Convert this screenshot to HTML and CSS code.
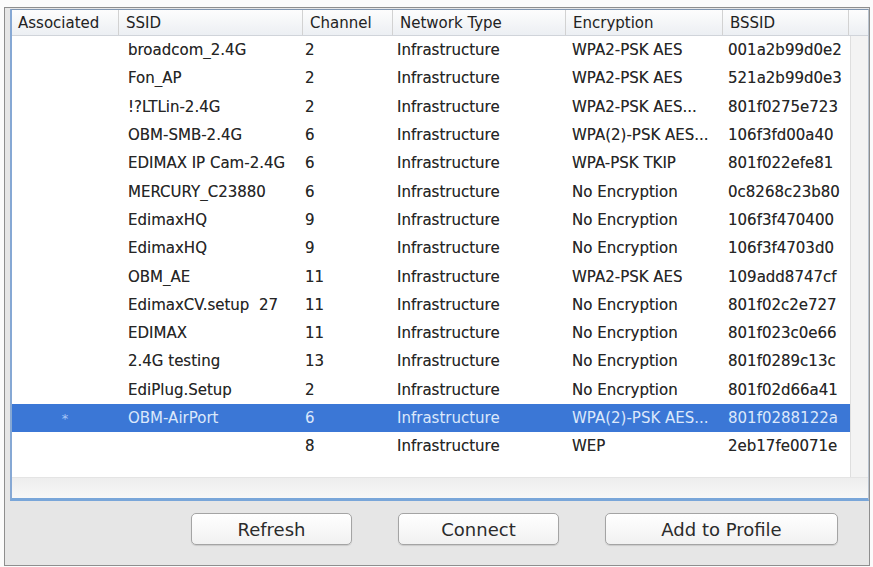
FILE: index.html
```html
<!DOCTYPE html>
<html>
<head>
    <title>Available Networks</title>
    <link rel="stylesheet" href="styles.css">
</head>
<body>
    <div class="window">
        <div class="list">
            <div class="list-header">
                <div class="hcell">Associated</div>
                <div class="hcell">SSID</div>
                <div class="hcell">Channel</div>
                <div class="hcell">Network Type</div>
                <div class="hcell">Encryption</div>
                <div class="hcell">BSSID</div>
                <div class="hcell"></div>
            </div>
            <div class="list-body">
                <div class="rows">
                    <div class="row"><span></span><span>broadcom_2.4G</span><span>2</span><span>Infrastructure</span><span>WPA2-PSK AES</span><span>001a2b99d0e2</span></div>
                    <div class="row"><span></span><span>Fon_AP</span><span>2</span><span>Infrastructure</span><span>WPA2-PSK AES</span><span>521a2b99d0e3</span></div>
                    <div class="row"><span></span><span>!?LTLin-2.4G</span><span>2</span><span>Infrastructure</span><span>WPA2-PSK AES...</span><span>801f0275e723</span></div>
                    <div class="row"><span></span><span>OBM-SMB-2.4G</span><span>6</span><span>Infrastructure</span><span>WPA(2)-PSK AES...</span><span>106f3fd00a40</span></div>
                    <div class="row"><span></span><span>EDIMAX IP Cam-2.4G</span><span>6</span><span>Infrastructure</span><span>WPA-PSK TKIP</span><span>801f022efe81</span></div>
                    <div class="row"><span></span><span>MERCURY_C23880</span><span>6</span><span>Infrastructure</span><span>No Encryption</span><span>0c8268c23b80</span></div>
                    <div class="row"><span></span><span>EdimaxHQ</span><span>9</span><span>Infrastructure</span><span>No Encryption</span><span>106f3f470400</span></div>
                    <div class="row"><span></span><span>EdimaxHQ</span><span>9</span><span>Infrastructure</span><span>No Encryption</span><span>106f3f4703d0</span></div>
                    <div class="row"><span></span><span>OBM_AE</span><span>11</span><span>Infrastructure</span><span>WPA2-PSK AES</span><span>109add8747cf</span></div>
                    <div class="row"><span></span><span>EdimaxCV.setup&nbsp; 27</span><span>11</span><span>Infrastructure</span><span>No Encryption</span><span>801f02c2e727</span></div>
                    <div class="row"><span></span><span>EDIMAX</span><span>11</span><span>Infrastructure</span><span>No Encryption</span><span>801f023c0e66</span></div>
                    <div class="row"><span></span><span>2.4G testing</span><span>13</span><span>Infrastructure</span><span>No Encryption</span><span>801f0289c13c</span></div>
                    <div class="row"><span></span><span>EdiPlug.Setup</span><span>2</span><span>Infrastructure</span><span>No Encryption</span><span>801f02d66a41</span></div>
                    <div class="row selected"><span class="assoc">*</span><span>OBM-AirPort</span><span>6</span><span>Infrastructure</span><span>WPA(2)-PSK AES...</span><span>801f0288122a</span></div>
                    <div class="row"><span></span><span></span><span>8</span><span>Infrastructure</span><span>WEP</span><span>2eb17fe0071e</span></div>
                </div>
                <div class="vscroll"></div>
            </div>
            <div class="hscroll"></div>
        </div>
        <div class="actions">
            <button class="btn btn-small">Refresh</button>
            <button class="btn btn-small">Connect</button>
            <button class="btn btn-wide">Add to Profile</button>
        </div>
    </div>
</body>
</html>
```

FILE: styles.css
```css
body {
    margin: 0;
    background: #fbfbfb;
    font-family: "DejaVu Sans", "Liberation Sans", sans-serif;
    color: #2e2e2e;
}

.window {
    margin: 7px 3px 0 4px;
    height: 556px;
    padding: 1px 0 0 5px;
    border: 1px solid #8e8e8e;
    background: #e6e6e6;
    display: flex;
    flex-direction: column;
}

.list {
    height: 488px;
    display: flex;
    flex-direction: column;
    background: #fff;
    border-top: 1px solid #7f95b0;
    border-left: 2px solid #86a8d4;
    border-right: 1px solid #b9c3cf;
    border-bottom: 3px solid #79a6d9;
}

.list-header {
    height: 25px;
    display: grid;
    grid-template-columns: 106px 184px 90px 173px 157px 126px 1fr;
    background: linear-gradient(#fdfdfd, #eceff3);
    border-bottom: 1px solid #d0d4da;
    font-size: 15px;
    color: #222;
}

.hcell {
    display: flex;
    align-items: center;
    padding-left: 7px;
    border-left: 1px solid #d2d2d2;
    white-space: nowrap;
}

.hcell:first-child {
    border-left: none;
    padding-left: 6px;
}

.list-body {
    flex: 1;
    display: flex;
    min-height: 0;
}

.rows {
    flex: 1;
}

.row {
    height: 28.3px;
    display: grid;
    grid-template-columns: 106px 184px 90px 173px 157px 1fr;
    align-items: center;
    font-size: 15px;
    color: #262626;
    text-shadow: 0 0 0.4px rgba(0, 0, 0, 0.4);
}

.row span {
    padding-left: 7px;
    white-space: nowrap;
    overflow: hidden;
}

.row span:nth-child(2) {
    padding-left: 10px;
}

.row span:nth-child(3) {
    padding-left: 3px;
}

.row span:nth-child(4) {
    padding-left: 5px;
}

.row span:nth-child(6) {
    padding-left: 6px;
}

.row.selected {
    background: #3b77d6;
    color: #dce8fb;
    text-shadow: none;
}

.row span.assoc {
    padding-left: 0;
    text-align: center;
    font-size: 13px;
    color: #a9c8f6;
}

.vscroll {
    width: 17px;
    background: #f3f3f3;
    border-left: 1px solid #dedede;
}

.hscroll {
    height: 20px;
    background: linear-gradient(#ededed, #f7f7f7);
    border-top: 1px solid #e4e4e4;
}

.actions {
    flex: 1;
    display: flex;
    justify-content: flex-end;
    align-items: flex-start;
    gap: 46px;
    padding: 12px 31px 0 0;
}

.btn {
    height: 32px;
    font-family: "DejaVu Sans", "Liberation Sans", sans-serif;
    font-size: 18px;
    color: #2b2b2b;
    background: linear-gradient(#ffffff, #f1f1f1);
    border: 1px solid #a4a4a4;
    border-radius: 5px;
    box-shadow: 0 1px 1px rgba(0, 0, 0, 0.12);
    padding: 0;
}

.btn-small {
    width: 161px;
}

.btn-wide {
    width: 233px;
}
```
